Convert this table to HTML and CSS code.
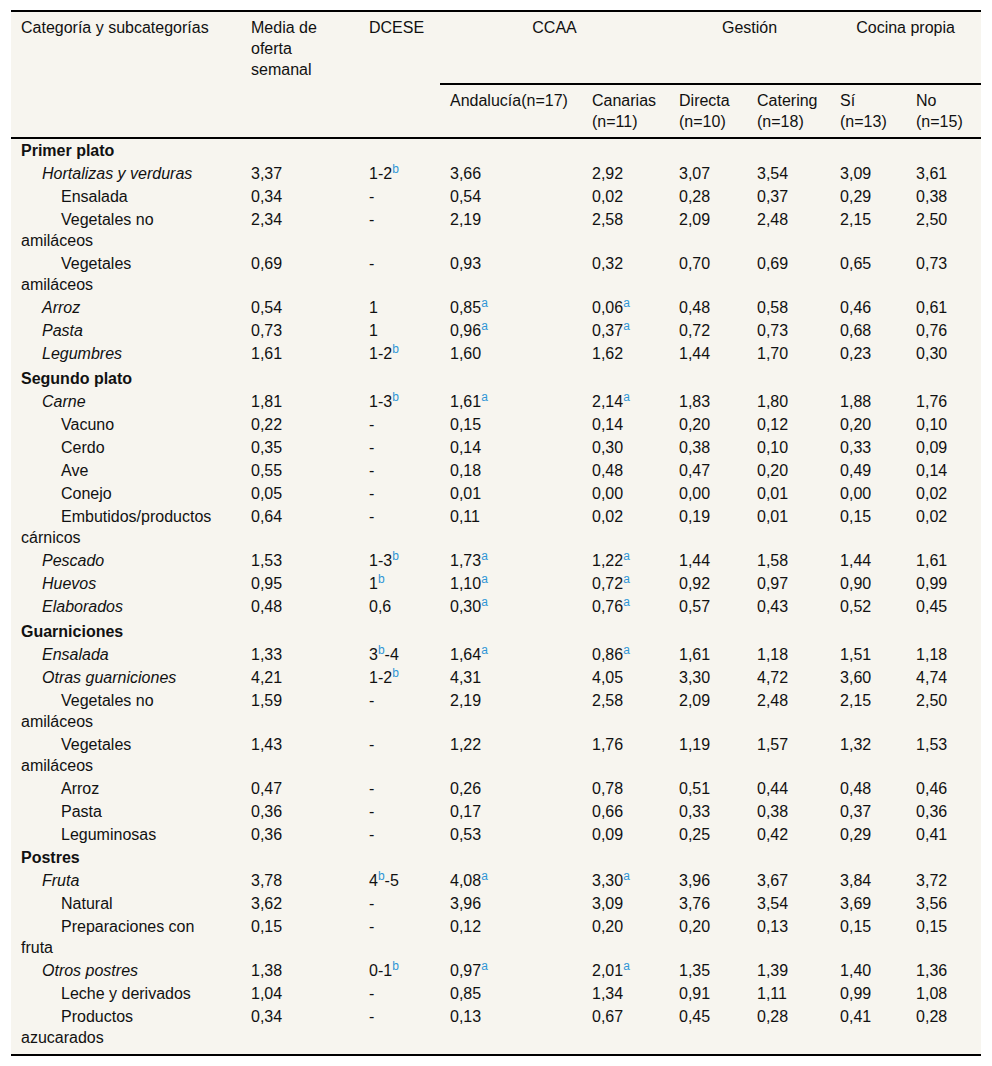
FILE: index.html
```html
<!DOCTYPE html>
<html lang="es">
<head>
<meta charset="utf-8">
<title>Oferta semanal por categoría</title>
<link rel="stylesheet" href="styles.css">
</head>
<body>
<div class="page">
<table class="data">
<colgroup>
<col class="c1"><col class="c2"><col class="c3"><col class="c4"><col class="c5"><col class="c6"><col class="c7"><col class="c8"><col class="c9">
</colgroup>
<thead>
<tr class="h1">
<th>Categoría y subcategorías</th>
<th>Media de oferta semanal</th>
<th>DCESE</th>
<th colspan="2" class="grp">CCAA</th>
<th colspan="2" class="grp">Gestión</th>
<th colspan="2" class="grp">Cocina propia</th>
</tr>
<tr class="h2">
<th></th><th></th><th></th>
<th>Andalucía(n=17)</th>
<th>Canarias (n=11)</th>
<th>Directa (n=10)</th>
<th>Catering (n=18)</th>
<th>Sí (n=13)</th>
<th>No (n=15)</th>
</tr>
</thead>
<tbody>
<tr class="cat"><td>Primer plato</td><td></td><td></td><td></td><td></td><td></td><td></td><td></td><td></td></tr>
<tr><td class="l1">Hortalizas y verduras</td><td>3,37</td><td>1-2<sup>b</sup></td><td>3,66</td><td>2,92</td><td>3,07</td><td>3,54</td><td>3,09</td><td>3,61</td></tr>
<tr><td class="l2">Ensalada</td><td>0,34</td><td>-</td><td>0,54</td><td>0,02</td><td>0,28</td><td>0,37</td><td>0,29</td><td>0,38</td></tr>
<tr><td class="l2">Vegetales no<br>amiláceos</td><td>2,34</td><td>-</td><td>2,19</td><td>2,58</td><td>2,09</td><td>2,48</td><td>2,15</td><td>2,50</td></tr>
<tr><td class="l2">Vegetales<br>amiláceos</td><td>0,69</td><td>-</td><td>0,93</td><td>0,32</td><td>0,70</td><td>0,69</td><td>0,65</td><td>0,73</td></tr>
<tr><td class="l1">Arroz</td><td>0,54</td><td>1</td><td>0,85<sup>a</sup></td><td>0,06<sup>a</sup></td><td>0,48</td><td>0,58</td><td>0,46</td><td>0,61</td></tr>
<tr><td class="l1">Pasta</td><td>0,73</td><td>1</td><td>0,96<sup>a</sup></td><td>0,37<sup>a</sup></td><td>0,72</td><td>0,73</td><td>0,68</td><td>0,76</td></tr>
<tr><td class="l1">Legumbres</td><td>1,61</td><td>1-2<sup>b</sup></td><td>1,60</td><td>1,62</td><td>1,44</td><td>1,70</td><td>0,23</td><td>0,30</td></tr>
<tr class="cat sp"><td>Segundo plato</td><td></td><td></td><td></td><td></td><td></td><td></td><td></td><td></td></tr>
<tr><td class="l1">Carne</td><td>1,81</td><td>1-3<sup>b</sup></td><td>1,61<sup>a</sup></td><td>2,14<sup>a</sup></td><td>1,83</td><td>1,80</td><td>1,88</td><td>1,76</td></tr>
<tr><td class="l2">Vacuno</td><td>0,22</td><td>-</td><td>0,15</td><td>0,14</td><td>0,20</td><td>0,12</td><td>0,20</td><td>0,10</td></tr>
<tr><td class="l2">Cerdo</td><td>0,35</td><td>-</td><td>0,14</td><td>0,30</td><td>0,38</td><td>0,10</td><td>0,33</td><td>0,09</td></tr>
<tr><td class="l2">Ave</td><td>0,55</td><td>-</td><td>0,18</td><td>0,48</td><td>0,47</td><td>0,20</td><td>0,49</td><td>0,14</td></tr>
<tr><td class="l2">Conejo</td><td>0,05</td><td>-</td><td>0,01</td><td>0,00</td><td>0,00</td><td>0,01</td><td>0,00</td><td>0,02</td></tr>
<tr><td class="l2">Embutidos/productos<br>cárnicos</td><td>0,64</td><td>-</td><td>0,11</td><td>0,02</td><td>0,19</td><td>0,01</td><td>0,15</td><td>0,02</td></tr>
<tr><td class="l1">Pescado</td><td>1,53</td><td>1-3<sup>b</sup></td><td>1,73<sup>a</sup></td><td>1,22<sup>a</sup></td><td>1,44</td><td>1,58</td><td>1,44</td><td>1,61</td></tr>
<tr><td class="l1">Huevos</td><td>0,95</td><td>1<sup>b</sup></td><td>1,10<sup>a</sup></td><td>0,72<sup>a</sup></td><td>0,92</td><td>0,97</td><td>0,90</td><td>0,99</td></tr>
<tr><td class="l1">Elaborados</td><td>0,48</td><td>0,6</td><td>0,30<sup>a</sup></td><td>0,76<sup>a</sup></td><td>0,57</td><td>0,43</td><td>0,52</td><td>0,45</td></tr>
<tr class="cat sp"><td>Guarniciones</td><td></td><td></td><td></td><td></td><td></td><td></td><td></td><td></td></tr>
<tr><td class="l1">Ensalada</td><td>1,33</td><td>3<sup>b</sup>-4</td><td>1,64<sup>a</sup></td><td>0,86<sup>a</sup></td><td>1,61</td><td>1,18</td><td>1,51</td><td>1,18</td></tr>
<tr><td class="l1">Otras guarniciones</td><td>4,21</td><td>1-2<sup>b</sup></td><td>4,31</td><td>4,05</td><td>3,30</td><td>4,72</td><td>3,60</td><td>4,74</td></tr>
<tr><td class="l2">Vegetales no<br>amiláceos</td><td>1,59</td><td>-</td><td>2,19</td><td>2,58</td><td>2,09</td><td>2,48</td><td>2,15</td><td>2,50</td></tr>
<tr><td class="l2">Vegetales<br>amiláceos</td><td>1,43</td><td>-</td><td>1,22</td><td>1,76</td><td>1,19</td><td>1,57</td><td>1,32</td><td>1,53</td></tr>
<tr><td class="l2">Arroz</td><td>0,47</td><td>-</td><td>0,26</td><td>0,78</td><td>0,51</td><td>0,44</td><td>0,48</td><td>0,46</td></tr>
<tr><td class="l2">Pasta</td><td>0,36</td><td>-</td><td>0,17</td><td>0,66</td><td>0,33</td><td>0,38</td><td>0,37</td><td>0,36</td></tr>
<tr><td class="l2">Leguminosas</td><td>0,36</td><td>-</td><td>0,53</td><td>0,09</td><td>0,25</td><td>0,42</td><td>0,29</td><td>0,41</td></tr>
<tr class="cat"><td>Postres</td><td></td><td></td><td></td><td></td><td></td><td></td><td></td><td></td></tr>
<tr><td class="l1">Fruta</td><td>3,78</td><td>4<sup>b</sup>-5</td><td>4,08<sup>a</sup></td><td>3,30<sup>a</sup></td><td>3,96</td><td>3,67</td><td>3,84</td><td>3,72</td></tr>
<tr><td class="l2">Natural</td><td>3,62</td><td>-</td><td>3,96</td><td>3,09</td><td>3,76</td><td>3,54</td><td>3,69</td><td>3,56</td></tr>
<tr><td class="l2">Preparaciones con<br>fruta</td><td>0,15</td><td>-</td><td>0,12</td><td>0,20</td><td>0,20</td><td>0,13</td><td>0,15</td><td>0,15</td></tr>
<tr><td class="l1">Otros postres</td><td>1,38</td><td>0-1<sup>b</sup></td><td>0,97<sup>a</sup></td><td>2,01<sup>a</sup></td><td>1,35</td><td>1,39</td><td>1,40</td><td>1,36</td></tr>
<tr><td class="l2">Leche y derivados</td><td>1,04</td><td>-</td><td>0,85</td><td>1,34</td><td>0,91</td><td>1,11</td><td>0,99</td><td>1,08</td></tr>
<tr class="last"><td class="l2">Productos<br>azucarados</td><td>0,34</td><td>-</td><td>0,13</td><td>0,67</td><td>0,45</td><td>0,28</td><td>0,41</td><td>0,28</td></tr>
</tbody>
</table>
</div>
</body>
</html>
```
FILE: styles.css
```css
html, body {
  margin: 0;
  padding: 0;
  background: #ffffff;
}

.page {
  padding: 10px 11px;
}

.data {
  border-collapse: collapse;
  table-layout: fixed;
  width: 970px;
  background: #f7f5ef;
  color: #111;
  font-family: "Liberation Sans", Arial, sans-serif;
  font-size: 16px;
  line-height: 21px;
  border-top: 2px solid #000;
  border-bottom: 2px solid #000;
}

.c1 { width: 230px; }
.c2 { width: 118px; }
.c3 { width: 81px; }
.c4 { width: 142px; }
.c5 { width: 87px; }
.c6 { width: 78px; }
.c7 { width: 83px; }
.c8 { width: 76px; }
.c9 { width: 75px; }

.data th {
  font-weight: normal;
  text-align: left;
  vertical-align: top;
}

.h1 th {
  padding: 5px 10px 4px;
}

.h1 th.grp {
  text-align: center;
  border-bottom: 2px solid #000;
}

.h2 th {
  padding: 5px 10px 5px;
  border-bottom: 2px solid #000;
}

.data td {
  padding: 1px 10px;
  vertical-align: top;
  text-align: left;
}

.cat td {
  font-weight: bold;
}

.cat.sp td {
  padding-top: 3px;
}

.last td {
  padding-bottom: 6px;
}

.data td.l1 {
  font-style: italic;
  text-indent: 21px;
}

.data td.l2 {
  text-indent: 40px;
}

.data sup {
  color: #2f95d6;
  font-size: 12px;
  line-height: 0;
  vertical-align: super;
  font-style: normal;
}
```
